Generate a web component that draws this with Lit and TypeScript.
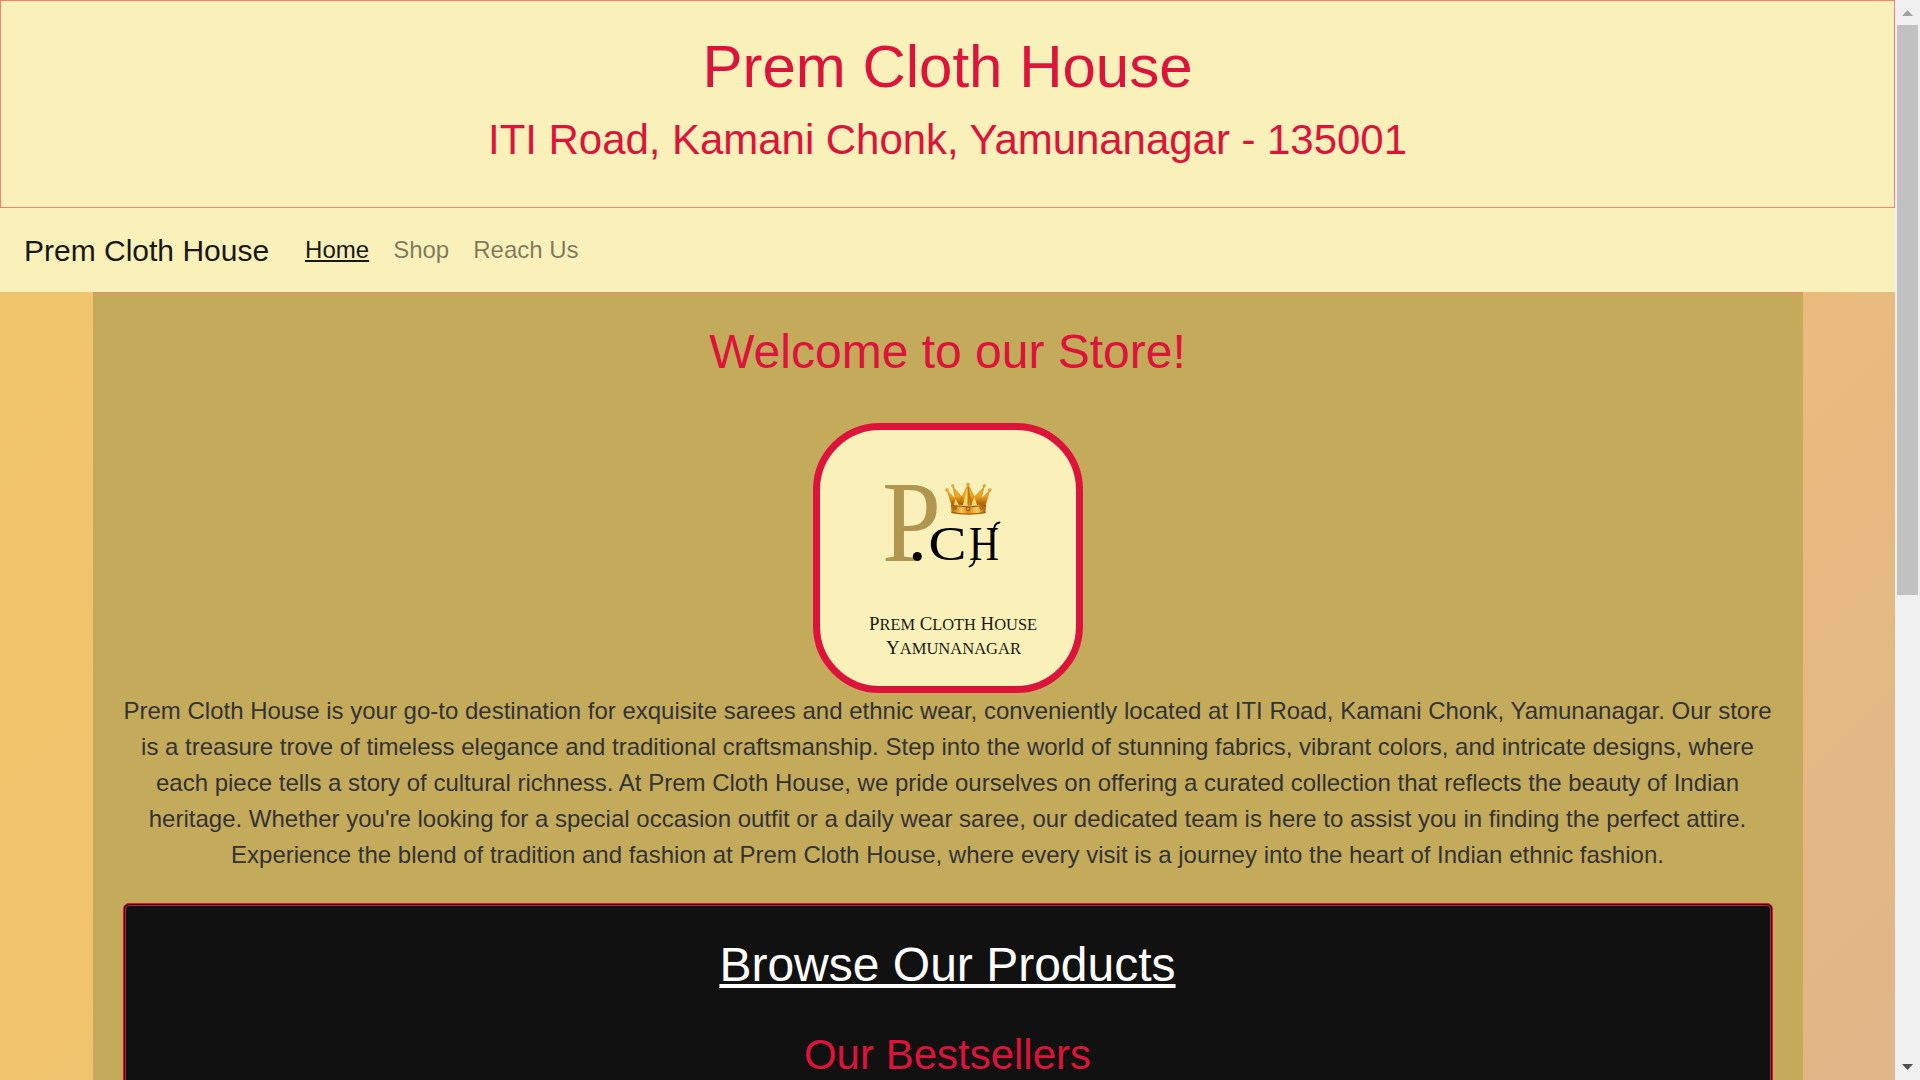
import { LitElement, html, svg, css } from "lit";
import { customElement } from "lit/decorators.js";

@customElement("store-logo")
class StoreLogo extends LitElement {
  static styles = css`
    :host { display: block; box-sizing: border-box; width: 270px; height: 270px; border: 7px solid #dc143c; border-radius: 67px; background: #faf0b9; overflow: hidden; }
    .art { display: block; width: 256px; height: 256px; }
    .serif { font-family: "Liberation Serif", serif; }
  `;
  private crown() {
    return svg`
      <defs>
        <linearGradient id="gold" x1="0" y1="0" x2="0" y2="1">
          <stop offset="0" stop-color="#f3b638"/><stop offset=".55" stop-color="#eda71f"/><stop offset="1" stop-color="#a85a06"/>
        </linearGradient>
        <linearGradient id="band" x1="0" y1="0" x2="1" y2="0">
          <stop offset="0" stop-color="#b86a0a"/><stop offset=".3" stop-color="#f7c64b"/><stop offset=".5" stop-color="#d98a14"/><stop offset=".75" stop-color="#f9cf58"/><stop offset="1" stop-color="#a65a05"/>
        </linearGradient>
      </defs>
      <path d="M131.500 75 L127.500 61 L135.500 69 L133 57 L142 67 L148 54.500 L154.500 67 L164 57 L161 69 L169.500 61 L165.500 75 Z" fill="url(#gold)" stroke="#c27a10" stroke-width=".6"/>
      <path d="M148 55 L143 75 H148 Z M135.500 69 L139 75 H134 Z M154.500 67 L151 75 H157 Z" fill="#ffdc6a"/>
      <path d="M148 57 L151.500 75 H148 Z M142 67 L139 75 M161 69 L158 75" fill="#cf8413" stroke="#b96f0d" stroke-width=".9"/>
      <path d="M131 75 Q148.500 78 166 75 L165.500 83 Q148.500 86 131.500 83 Z" fill="url(#band)"/>
      <path d="M131 75.500 Q148.500 78.300 166 75.500 M131.500 82.500 Q148.500 85.600 165.500 82.500" fill="none" stroke="#9a4f05" stroke-width="1"/>
      <g fill="#f1b234" stroke="#c47712" stroke-width=".4">
        <circle cx="127" cy="60" r="1.500"/><circle cx="132.800" cy="55.800" r="1.300"/><circle cx="148" cy="54.500" r="1.500"/><circle cx="164.300" cy="55.800" r="1.300"/><circle cx="169.800" cy="60" r="1.500"/>
      </g>
      <g fill="#e98b2c" stroke="#7c3e03" stroke-width=".7">
        <circle cx="148" cy="78.800" r="1.900"/><circle cx="135" cy="78" r="1.400"/><circle cx="161.500" cy="78" r="1.400"/>
      </g>`;
  }
  render() {
    return html`<svg class="art" viewBox="0 0 256 256">
      <text class="serif" x="62" y="130.500" font-size="117" textLength="59" lengthAdjust="spacingAndGlyphs" fill="#b0964f">P</text>
      <circle cx="97.300" cy="126.500" r="4.500" fill="#000"/>
      <text class="serif" x="108.500" y="130" font-size="49" textLength="38" lengthAdjust="spacingAndGlyphs" fill="#000">C</text>
      <text class="serif" x="149" y="130" font-size="49" textLength="30" lengthAdjust="spacingAndGlyphs" fill="#000">H</text>
      <g fill="none" stroke="#000" stroke-linecap="round">
        <path d="M154.800 127 Q155 135 149.500 136.500" stroke-width="1.800"/>
        <path d="M174.200 101 Q173.500 93.500 179.500 92.500" stroke-width="1.800"/>
      </g>
      ${this.crown()}
      <g class="serif" fill="#1b1a12">
        <text x="49" y="200" font-size="19" textLength="168" lengthAdjust="spacingAndGlyphs">P<tspan font-size="16.500">REM</tspan> C<tspan font-size="16.500">LOTH</tspan> H<tspan font-size="16.500">OUSE</tspan></text>
        <text x="66" y="224" font-size="19" textLength="135" lengthAdjust="spacingAndGlyphs">Y<tspan font-size="16.500">AMUNANAGAR</tspan></text>
      </g>
    </svg>`;
  }
}

@customElement("app-root")
class AppRoot extends LitElement {
  static styles = css`
    :host { display: flex; width: 1920px; height: 1080px; overflow: hidden; font-family: "Liberation Sans", Arial, sans-serif; font-size: 24px; line-height: 36px; color: #333; }
    * { box-sizing: border-box; }
    h1, h2, h3, p { margin: 0; font-weight: 400; }
    .page { width: 1895px; height: 1080px; overflow: hidden; background: linear-gradient(135deg, #f1c56b 8%, #f0c36c 28%, #e8bb7e 56%, #e1b688 76%, #deb48c 100%) 0 0 / 1895px 1951px no-repeat; }
    .header { height: 208px; padding: 30px; border: 1px solid #fa8072; background: #faf0b9; color: #dc143c; text-align: center; }
    .h1 { font-size: 60px; line-height: 72px; margin-bottom: 12px; }
    .h2 { font-size: 48px; line-height: 57.6px; margin-bottom: 12px; }
    .h3 { font-size: 42px; line-height: 50.4px; }
    .address { letter-spacing: -.04px; }
    .nav { display: flex; align-items: center; height: 84px; padding: 12px 24px; background: #faf0b9; }
    .brand { margin-right: 24px; font-size: 30px; line-height: 45px; color: #191812; }
    .link { padding: 12px; color: rgba(0, 0, 0, .5); }
    .link.active { color: #191812; text-decoration: underline; }
    .main { width: 1710px; height: 800px; margin: 0 auto; padding: 30px 30px 0; border-top: 1px solid #fa8072; background: #c4aa5b; text-align: center; }
    .welcome { color: #dc143c; }
    .logo { margin: 42px auto 0; }
    .products { margin-top: 30px; height: 400px; padding: 30px; border: 3px double #dc143c; border-radius: 6px; background: #111; }
    .browse { color: #fff; text-decoration: underline; }
    .best { margin-top: 37px; color: #dc143c; }
    .scroll { display: flex; flex-direction: column; align-items: center; width: 25px; height: 1080px; background: #f0f0f0; }
    .arrow { display: block; width: 21px; height: 25px; flex: none; }
    .thumb { width: 21px; height: 570px; background: #c1c1c1; }
    .track { flex: 1; }
  `;
  render() {
    return html`
      <div class="page">
        <header class="header">
          <h1 class="h1">Prem Cloth House</h1>
          <h3 class="h3 address">ITI Road, Kamani Chonk, Yamunanagar - 135001</h3>
        </header>
        <nav class="nav">
          <span class="brand">Prem Cloth House</span>
          <a class="link active">Home</a><a class="link">Shop</a><a class="link">Reach Us</a>
        </nav>
        <main class="main">
          <h2 class="h2 welcome">Welcome to our Store!</h2>
          <store-logo class="logo"></store-logo>
          <p>Prem Cloth House is your go-to destination for exquisite sarees and ethnic wear, conveniently located at ITI Road, Kamani Chonk, Yamunanagar. Our store is a treasure trove of timeless elegance and traditional craftsmanship. Step into the world of stunning fabrics, vibrant colors, and intricate designs, where each piece tells a story of cultural richness. At Prem Cloth House, we pride ourselves on offering a curated collection that reflects the beauty of Indian heritage. Whether you're looking for a special occasion outfit or a daily wear saree, our dedicated team is here to assist you in finding the perfect attire. Experience the blend of tradition and fashion at Prem Cloth House, where every visit is a journey into the heart of Indian ethnic fashion.</p>
          <section class="products">
            <h2 class="h2 browse">Browse Our Products</h2>
            <h3 class="h3 best">Our Bestsellers</h3>
          </section>
        </main>
      </div>
      <div class="scroll">
        <svg class="arrow" viewBox="0 0 21 25"><path d="M5 16 L10.500 10 L16 16 Z" fill="#a3a3a3"/></svg>
        <div class="thumb"></div>
        <div class="track"></div>
        <svg class="arrow" viewBox="0 0 21 25"><path d="M5 9 L10.500 15 L16 9 Z" fill="#505050"/></svg>
      </div>`;
  }
}
